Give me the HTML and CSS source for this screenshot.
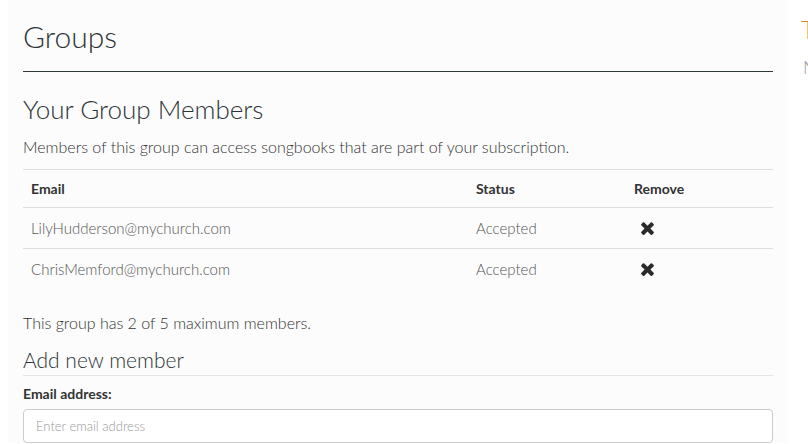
FILE: index.html
```html
<!DOCTYPE html>
<html>
<head>
<meta charset="utf-8">
<link rel="stylesheet" href="styles.css">
</head>
<body>
<div class="page">
  <main class="main">
    <header class="page-head">
      <h1 class="page-title">Groups</h1>
    </header>
    <section class="members">
      <h2 class="section-title">Your Group Members</h2>
      <p class="lead">Members of this group can access songbooks that are part of your subscription.</p>
      <table class="members-table">
        <thead>
          <tr>
            <th class="col-email">Email</th>
            <th class="col-status">Status</th>
            <th class="col-remove">Remove</th>
          </tr>
        </thead>
        <tbody>
          <tr>
            <td>LilyHudderson@mychurch.com</td>
            <td>Accepted</td>
            <td><svg class="remove-icon" viewBox="302 250 1188 1304" aria-label="Remove"><path d="M1490 1322q0 40-28 68l-136 136q-28 28-68 28t-68-28l-294-294-294 294q-28 28-68 28t-68-28l-136-136q-28-28-28-68t28-68l294-294-294-294q-28-28-28-68t28-68l136-136q28-28 68-28t68 28l294 294 294-294q28-28 68-28t68 28l136 136q28 28 28 68t-28 68l-294 294 294 294q28 28 28 68z"/></svg></td>
          </tr>
          <tr>
            <td>ChrisMemford@mychurch.com</td>
            <td>Accepted</td>
            <td><svg class="remove-icon" viewBox="302 250 1188 1304" aria-label="Remove"><path d="M1490 1322q0 40-28 68l-136 136q-28 28-68 28t-68-28l-294-294-294 294q-28 28-68 28t-68-28l-136-136q-28-28-28-68t28-68l294-294-294-294q-28-28-28-68t28-68l136-136q28-28 68-28t68 28l294 294 294-294q28-28 68-28t68 28l136 136q28 28 28 68t-28 68l-294 294 294 294q28 28 28 68z"/></svg></td>
          </tr>
        </tbody>
      </table>
      <p class="count">This group has 2 of 5 maximum members.</p>
      <h3 class="sub-title">Add new member</h3>
      <form class="add-form">
        <label class="field-label" for="email">Email address:</label>
        <input class="field-input" id="email" type="email" placeholder="Enter email address">
      </form>
    </section>
  </main>
  <aside class="sidebar">
    <h2 class="side-title">Tips</h2>
    <p class="side-text">Need help?</p>
  </aside>
</div>
</body>
</html>
```

FILE: styles.css
```css
html, body {
  margin: 0;
  padding: 0;
  background: #ffffff;
  overflow: hidden;
}

body {
  font-family: "Lato", "Liberation Sans", sans-serif;
  color: #333333;
  width: 808px;
  height: 444px;
}

.page {
  display: flex;
  width: 1100px;
}

.main {
  box-sizing: border-box;
  width: 780px;
  margin-left: 8px;
  padding: 0 15px;
  background: #fcfcfc;
  flex: none;
}

.page-head {
  border-bottom: 1px solid #2f3a37;
  height: 72px;
  box-sizing: border-box;
}

.page-title {
  margin: 0;
  padding-top: 18px;
  font-size: 30px;
  font-weight: 300;
  line-height: 36px;
  color: #2e3436;
}

.section-title {
  margin: 20px 0 0;
  font-size: 26px;
  font-weight: 300;
  line-height: 34px;
  color: #2e3436;
}

.lead {
  margin: 9px 0 0;
  font-size: 16px;
  font-weight: 300;
  line-height: 24px;
  color: #333;
}

.members-table {
  margin-top: 10px;
  width: 750px;
  border-collapse: collapse;
  table-layout: fixed;
}

.members-table th,
.members-table td {
  text-align: left;
  padding: 0 8px;
  border-top: 1px solid #dddddd;
}

.members-table th {
  height: 37px;
  font-size: 14px;
  font-weight: 700;
  color: #333;
}

.members-table td {
  height: 40px;
  font-size: 15px;
  font-weight: 300;
  color: #555;
}

.col-email { width: 429px; }
.col-status { width: 142px; }
.col-remove { width: auto; }

.remove-icon {
  display: block;
  width: 13px;
  height: 14px;
  margin-left: 7px;
  fill: #2b2b2b;
}

.count {
  margin: 22px 0 0;
  font-size: 16px;
  font-weight: 300;
  line-height: 24px;
  color: #333;
}

.sub-title {
  margin: 12px 0 0;
  padding-bottom: 2px;
  font-size: 21px;
  font-weight: 300;
  line-height: 26px;
  color: #2e3436;
  border-bottom: 1px solid #e5e5e5;
}

.add-form {
  display: flex;
  flex-direction: column;
}

.field-label {
  margin-top: 8px;
  font-size: 14px;
  font-weight: 700;
  line-height: 20px;
  color: #333;
}

.field-input {
  box-sizing: border-box;
  margin-top: 5px;
  width: 750px;
  height: 34px;
  padding: 6px 12px;
  border: 1px solid #cccccc;
  border-radius: 4px;
  background: #fff;
  font-family: inherit;
  font-size: 13px;
  font-weight: 300;
  color: #555;
}

.field-input::placeholder {
  color: #999;
}

.sidebar {
  margin-left: 13px;
  padding-top: 14px;
}

.side-title {
  margin: 0;
  font-size: 25px;
  font-weight: 300;
  line-height: 30px;
  color: #d9822b;
}

.side-text {
  margin: 12px 0 0 2px;
  font-size: 18px;
  font-weight: 300;
  color: #999;
}
```
